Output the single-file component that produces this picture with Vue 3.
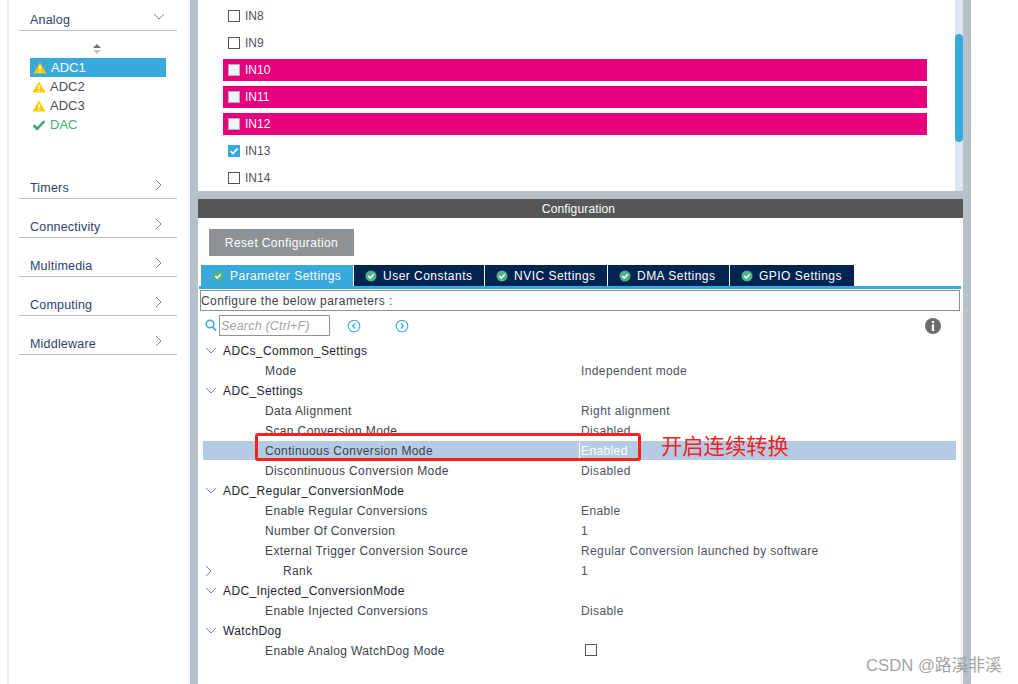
<script setup>
const cats = ['Timers', 'Connectivity', 'Multimedia', 'Computing', 'Middleware']
const items = [
  { n: 'ADC1', icon: 'warn', sel: true },
  { n: 'ADC2', icon: 'warn' },
  { n: 'ADC3', icon: 'warn' },
  { n: 'DAC', icon: 'ok' }
]
const inputs = [
  { n: 'IN8' }, { n: 'IN9' },
  { n: 'IN10', pink: true }, { n: 'IN11', pink: true }, { n: 'IN12', pink: true },
  { n: 'IN13', on: true }, { n: 'IN14' }
]
const tabs = [
  { n: 'Parameter Settings', w: 152, active: true },
  { n: 'User Constants', w: 130 },
  { n: 'NVIC Settings', w: 122 },
  { n: 'DMA Settings', w: 121 },
  { n: 'GPIO Settings', w: 124 }
]
const tree = [
  { l: 'ADCs_Common_Settings', g: 1, c: 'down' },
  { l: 'Mode', v: 'Independent mode' },
  { l: 'ADC_Settings', g: 1, c: 'down' },
  { l: 'Data Alignment', v: 'Right alignment' },
  { l: 'Scan Conversion Mode', v: 'Disabled' },
  { l: 'Continuous Conversion Mode', v: 'Enabled', sel: true },
  { l: 'Discontinuous Conversion Mode', v: 'Disabled' },
  { l: 'ADC_Regular_ConversionMode', g: 1, c: 'down' },
  { l: 'Enable Regular Conversions', v: 'Enable' },
  { l: 'Number Of Conversion', v: '1' },
  { l: 'External Trigger Conversion Source', v: 'Regular Conversion launched by software' },
  { l: 'Rank', v: '1', deep: true, c: 'right' },
  { l: 'ADC_Injected_ConversionMode', g: 1, c: 'down' },
  { l: 'Enable Injected Conversions', v: 'Disable' },
  { l: 'WatchDog', g: 1, c: 'down' },
  { l: 'Enable Analog WatchDog Mode', box: true }
]
</script>

<template>
  <div class="app">
    <aside class="side">
      <div class="cat first">
        <span>Analog</span>
        <svg class="chev-d" width="12" height="8" viewBox="0 0 12 8"><path d="M1 1l5 5 5-5" fill="none" stroke="#7d8388" stroke-width="1"/></svg>
      </div>
      <div class="sort">
        <svg width="10" height="12" viewBox="0 0 10 12"><path d="M5 1l4 4H1z" fill="#6d6f72"/><path d="M5 11L1 7h8z" fill="#c4c7ca"/></svg>
      </div>
      <ul class="items">
        <li v-for="it in items" :key="it.n" :class="['item', { sel: it.sel, dac: it.icon === 'ok' }]">
          <svg v-if="it.icon === 'warn'" width="14" height="12" viewBox="0 0 14 12"><path d="M7 0.5l6.6 11H0.4z" fill="#fdca00"/><path d="M6.3 4h1.4v4H6.3zM6.3 9h1.4v1.4H6.3z" fill="#fff"/></svg>
          <svg v-else width="14" height="12" viewBox="0 0 14 12"><path d="M1.5 6.2l3.7 3.6 7.2-7.6" fill="none" stroke="#4aa56f" stroke-width="2.6"/></svg>
          <span>{{ it.n }}</span>
        </li>
      </ul>
      <div v-for="c in cats" :key="c" class="cat">
        <span>{{ c }}</span>
        <svg class="chev-r" width="8" height="12" viewBox="0 0 8 12"><path d="M1 1l5 5-5 5" fill="none" stroke="#7d8388" stroke-width="1"/></svg>
      </div>
    </aside>

    <main class="center">
      <section class="top">
        <div class="pins">
          <div v-for="p in inputs" :key="p.n" :class="['pin', { pink: p.pink }]">
            <span :class="['cb', { on: p.on }]">
              <svg v-if="p.on" width="12" height="12" viewBox="0 0 12 12"><path d="M2.5 6.2l2.4 2.4 4.6-5" fill="none" stroke="#fff" stroke-width="1.7"/></svg>
            </span>
            <span>{{ p.n }}</span>
          </div>
        </div>
        <div class="track"><div class="thumb"></div></div>
      </section>

      <section class="config">
        <header class="title">Configuration</header>
        <button class="reset">Reset Configuration</button>
        <nav class="tabs">
          <div v-for="t in tabs" :key="t.n" :class="['tab', { active: t.active }]" :style="{ width: t.w + 'px' }">
            <svg width="12" height="12" viewBox="0 0 12 12"><circle cx="6" cy="6" r="5.5" fill="#4fb286"/><path d="M3.3 6.1l2 2 3.4-3.8" fill="none" stroke="#fff" stroke-width="1.6"/></svg>
            <span>{{ t.n }}</span>
          </div>
        </nav>
        <div class="tabline"></div>
        <div class="hint">Configure the below parameters :</div>
        <div class="body">
          <div class="tools">
            <svg class="mag" width="12" height="13" viewBox="0 0 12 13"><circle cx="5" cy="5" r="3.8" fill="none" stroke="#39a9dc" stroke-width="1.5"/><path d="M7.8 8l3.2 3.6" stroke="#39a9dc" stroke-width="1.7"/></svg>
            <div class="search">Search (Ctrl+F)</div>
            <svg class="nav-a" width="14" height="14" viewBox="0 0 14 14"><circle cx="7" cy="7" r="5.8" fill="none" stroke="#39a9dc" stroke-width="1.1"/><path d="M8.2 4.4L5.6 7l2.6 2.6" fill="none" stroke="#39a9dc" stroke-width="1.2"/></svg>
            <svg class="nav-b" width="14" height="14" viewBox="0 0 14 14"><circle cx="7" cy="7" r="5.8" fill="none" stroke="#39a9dc" stroke-width="1.1"/><path d="M5.8 4.4L8.4 7 5.8 9.6" fill="none" stroke="#39a9dc" stroke-width="1.2"/></svg>
            <svg class="info" width="16" height="16" viewBox="0 0 16 16"><circle cx="8" cy="8" r="8" fill="#6a6d6f"/><rect x="6.9" y="3" width="2.2" height="2.2" fill="#fff"/><rect x="6.9" y="6.4" width="2.2" height="6.6" fill="#fff"/></svg>
          </div>
          <div class="tree">
            <div v-for="r in tree" :key="r.l" :class="['row', { sel: r.sel, group: r.g }]">
              <span class="twist">
                <svg v-if="r.c === 'down'" width="12" height="8" viewBox="0 0 12 8"><path d="M1 1l5 5 5-5" fill="none" stroke="#7d8388" stroke-width="1"/></svg>
                <svg v-else-if="r.c === 'right'" width="8" height="12" viewBox="0 0 8 12"><path d="M1 1l5 5-5 5" fill="none" stroke="#7d8388" stroke-width="1"/></svg>
              </span>
              <span :class="['label', { child: !r.g && !r.deep, deep: r.deep }]">{{ r.l }}</span>
              <span v-if="r.v" class="val">{{ r.v }}</span>
              <span v-if="r.box" class="cb valbox"></span>
            </div>
          </div>
        </div>
      </section>
    </main>

    <div class="redbox"></div>
    <div class="note">开启连续转换</div>
    <div class="mark">CSDN @路溪非溪</div>
  </div>
</template>

<style scoped>
.app { position: relative; width: 1018px; height: 684px; overflow: hidden; display: flex; background: #fff; font-family: "Liberation Sans", Arial, sans-serif; font-size: 12px; letter-spacing: .38px; color: #3d3f4c; }
.side { width: 179px; margin-left: 7px; border-left: 2px solid #eef1f3; border-right: 2px solid #f6f7f8; flex: none; box-sizing: content-box; }
.cat { display: flex; align-items: center; justify-content: space-between; height: 19px; margin: 20px 0 0 10px; width: 158px; box-sizing: border-box; padding: 0 12px 3px 11px; border-bottom: 1px solid #b6c1c8; color: #2e3f70; letter-spacing: .2px; font-size: 12.5px; }
.cat.first { margin-top: 12px; }
.cat.first + .sort { margin-top: 12px; }
.chev-d { margin-top: -5px; margin-right: 0; }
.chev-r { margin-top: -6px; margin-right: 2px; }
.sort { height: 12px; margin-left: 83px; }
.items { list-style: none; margin: 3px 0 46px 21px; padding: 0; width: 136px; }
.item { height: 19px; display: flex; align-items: center; gap: 4px; font-size: 13px; letter-spacing: 0; color: #4c4d58; padding-left: 2px; }
.item.sel { background: #39a9dc; color: #fff; padding-left: 3px; }
.item.dac { color: #3fb06f; }
.center { width: 765px; flex: none; padding: 0 8px; background: #b6c1c8; display: flex; flex-direction: column; gap: 8px; }
.top { height: 191px; display: flex; background: #fff; flex: none; }
.pins { flex: 1; padding: 5px 28px 0 25px; display: flex; flex-direction: column; gap: 5px; }
.pin { height: 22px; display: flex; align-items: center; gap: 5px; padding-left: 5px; color: #50525f; letter-spacing: 0; }
.pin.pink { background: #e6007e; color: #fff; }
.cb { width: 12px; height: 12px; box-sizing: border-box; border: 1px solid #555; background: #fff; display: block; flex: none; }
.pin.pink .cb { background: #f0f2f4; border-color: #aab0b5; }
.cb.on { background: #39a9dc; border-color: #39a9dc; position: relative; }
.cb.on svg { position: absolute; left: -1px; top: -1px; }
.track { width: 8px; background: #dae8f5; padding-top: 34px; flex: none; }
.thumb { height: 108px; background: #39a9dc; border-radius: 4px; }
.config { flex: 1; background: #fff; display: flex; flex-direction: column; align-items: flex-start; min-height: 0; }
.title { height: 19px; width: 100%; box-sizing: border-box; padding-right: 4px; background: #555756; color: #fff; text-align: center; line-height: 20px; letter-spacing: .15px; }
.reset { margin: 11px 0 0 11px; width: 145px; height: 27px; border: 0; background: #8d9297; color: #fff; font: inherit; letter-spacing: .38px; padding: 0; }
.tabs { display: flex; gap: 1px; margin: 9px 0 0 3px; height: 21px; }
.tab { background: #002452; color: #fff; display: flex; align-items: center; gap: 6px; padding-left: 11px; box-sizing: border-box; letter-spacing: .48px; }
.tab.active { background: #39a9dc; }
.tabline { width: 762px; height: 3px; margin-left: 1px; background: #39a9dc; flex: none; }
.hint { width: 760px; height: 21px; margin: 1px 0 0 2px; box-sizing: border-box; border: 1px solid #8d9297; line-height: 20px; padding-left: 0; letter-spacing: .45px; flex: none; }
.body { width: 762px; border-right: 3px solid #f1f3f5; flex: 1; }
.tools { display: flex; align-items: center; margin-top: 4px; height: 21px; padding-left: 7px; }
.search { width: 111px; height: 21px; margin-left: 2px; box-sizing: border-box; border: 1px solid #8d9297; font-style: italic; color: #a0a3a8; line-height: 21px; padding-left: 1px; font-size: 12.5px; letter-spacing: .2px; }
.nav-a { margin-left: 17px; margin-top: 1px; }
.nav-b { margin-left: 34px; margin-top: 1px; }
.info { margin-left: 516px; margin-top: 1px; }
.tree { margin: 4px 0 0 5px; width: 753px; }
.row { height: 20px; display: flex; align-items: center; box-sizing: border-box; padding-top: 1px; }
.row.sel { background: #b5cbe3; background-clip: content-box; }
.twist { width: 20px; flex: none; display: flex; align-items: center; padding-left: 2px; box-sizing: border-box; }
.label { width: 358px; flex: none; box-sizing: border-box; }
.label.child { padding-left: 42px; }
.label.deep { padding-left: 60px; }
.group .label { color: #22232e; }
.val { color: #50525f; }
.row.sel .val { color: #fff; border-left: 1px solid #fff; margin-left: -2px; padding-left: 1px; line-height: 18px; }
.valbox { margin: -1px 0 0 4px; }
.redbox { position: absolute; left: 255px; top: 433px; width: 386px; height: 28px; box-sizing: border-box; border: 3px solid #f5211c; border-radius: 3px; }
.note { position: absolute; left: 661px; top: 431px; font-family: "Noto Sans CJK SC", sans-serif; font-size: 21.3px; letter-spacing: 0; line-height: 28px; color: #f5211c; }
.mark { position: absolute; left: 866px; top: 656px; font-family: "Liberation Sans", "Noto Sans CJK SC", sans-serif; font-size: 16.7px; letter-spacing: 0; line-height: 20px; color: #9a9a9a; opacity: .9; }
</style>
